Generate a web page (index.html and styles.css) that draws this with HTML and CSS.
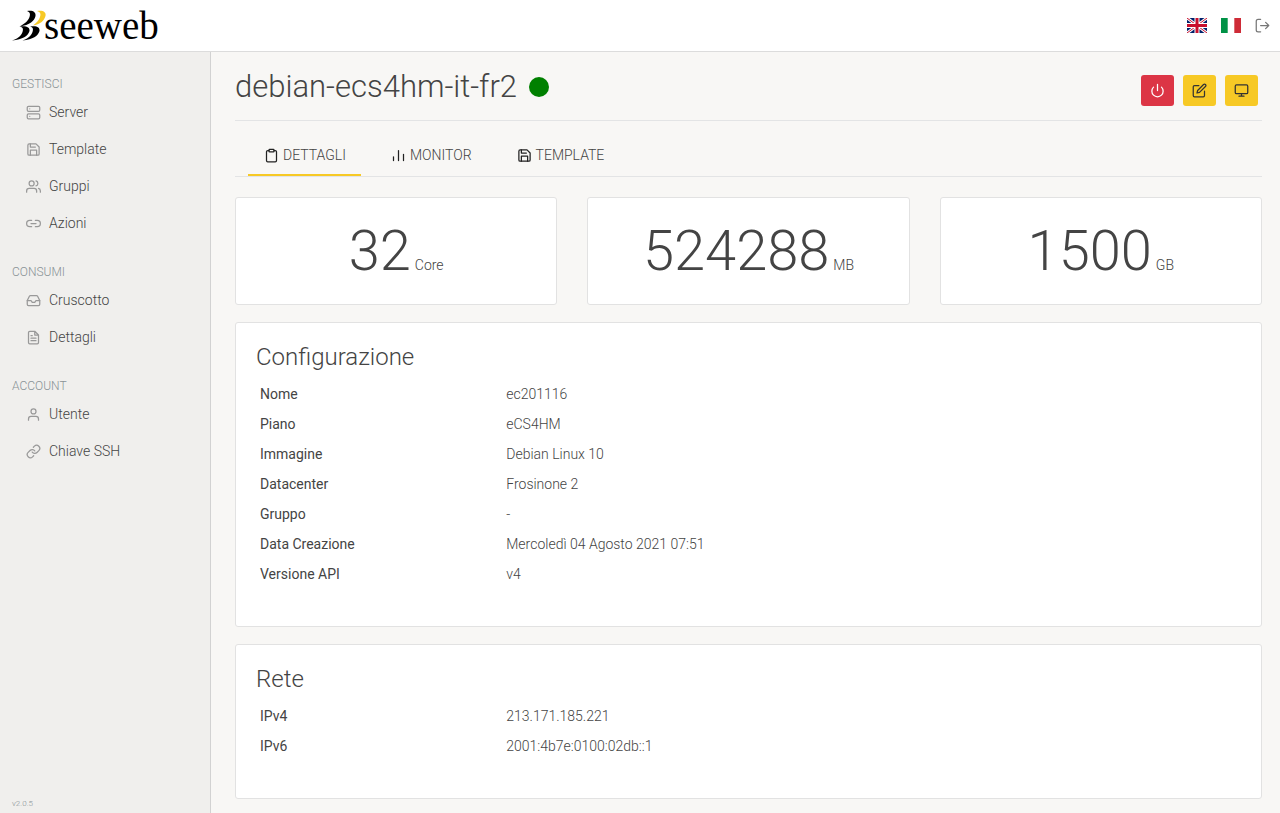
FILE: index.html
```html
<!DOCTYPE html>
<html lang="it">
<head>
<meta charset="utf-8">
<meta name="viewport" content="width=device-width, initial-scale=1">
<title>debian-ecs4hm-it-fr2 - Seeweb</title>
<link rel="stylesheet" href="styles.css">
</head>
<body>
<svg class="sprite" aria-hidden="true">
  <symbol id="save" viewBox="0 0 24 24"><path d="M19 21H5a2 2 0 0 1-2-2V5a2 2 0 0 1 2-2h11l5 5v11a2 2 0 0 1-2 2z"/><path d="M17 21v-8H7v8M7 3v5h8"/></symbol>
</svg>
<header class="topbar">
  <a class="brand" href="#" aria-label="seeweb">
    <svg class="brand-mark" viewBox="0 0 36 32" aria-hidden="true">
      <path d="M15 1C21 0 24 2 23.500 6C22.500 11 18 15 7.500 16.500C13 13.500 16 11 17.500 7C18.500 4 18 2 15 1Z"/>
      <path fill="#f7c925" d="M25 1C31 0 34.500 2 33.500 6C32 11 28 14.500 21 15.500C25 12.500 27 10 28 7C29 4 28.500 2 25 1Z"/>
      <path d="M7.500 16.500C14 15.500 18 17 17.500 21C16 26 11 29.500 0 30.500C6 28.500 9 26 10.500 22C11.500 19 11 17 7.500 16.500Z"/>
      <path d="M18 16.500C24.500 15.500 28 17 27.500 21C26 26 21 29.500 10.500 30.500C16 28.500 19 26 20.500 22C21.500 19 21 17 18 16.500Z"/>
    </svg>
    <span class="brand-name">seeweb</span>
  </a>
  <div class="topbar-tools">
    <button class="flag" aria-label="English">
      <svg viewBox="0 0 20 15"><path fill="#01216b" d="M0 0h20v15H0z"/><path stroke="#fff" stroke-width="3" d="M0 0l20 15M20 0L0 15"/><path stroke="#c8102e" stroke-width="1" d="M0 0l20 15M20 0L0 15"/><path stroke="#fff" stroke-width="5" d="M10 0v15M0 7.500h20"/><path stroke="#c8102e" stroke-width="3" d="M10 0v15M0 7.500h20"/></svg>
    </button>
    <button class="flag" aria-label="Italiano">
      <svg viewBox="0 0 20 15"><path fill="#fff" d="M0 0h20v15H0z"/><path fill="#009246" d="M0 0h6.700v15H0z"/><path fill="#ce2b37" d="M13.300 0H20v15h-6.700z"/></svg>
    </button>
    <button class="logout" aria-label="Esci"><svg class="icon" viewBox="0 0 24 24"><path d="M9 22H5a3 3 0 0 1-3-3V5a3 3 0 0 1 3-3h4M17 17l5-5-5-5M22 12H9"/></svg></button>
  </div>
</header>
<div class="shell">
  <nav class="sidebar" aria-label="Menu">
    <section class="menu-group">
      <h2 class="menu-title">GESTISCI</h2>
      <ul class="menu">
        <li><a class="menu-link" href="#"><svg class="icon" viewBox="0 0 24 24"><rect x="2" y="2" width="20" height="8" rx="2"/><rect x="2" y="14" width="20" height="8" rx="2"/><path d="M6 6h.01M6 18h.01"/></svg>Server</a></li>
        <li><a class="menu-link" href="#"><svg class="icon"><use href="#save"/></svg>Template</a></li>
        <li><a class="menu-link" href="#"><svg class="icon" viewBox="0 0 24 24"><path d="M17 21v-2a4 4 0 0 0-4-4H5a4 4 0 0 0-4 4v2"/><circle cx="9" cy="7" r="4"/><path d="M23 21v-2a4 4 0 0 0-3-3.870M16 3.130a4 4 0 0 1 0 7.750"/></svg>Gruppi</a></li>
        <li><a class="menu-link" href="#"><svg class="icon" viewBox="0 0 24 24"><path d="M15 7h3a5 5 0 0 1 0 10h-3m-6 0H6A5 5 0 0 1 6 7h3M8 12h8"/></svg>Azioni</a></li>
      </ul>
    </section>
    <section class="menu-group">
      <h2 class="menu-title">CONSUMI</h2>
      <ul class="menu">
        <li><a class="menu-link" href="#"><svg class="icon" viewBox="0 0 24 24"><path d="M22 12h-6l-2 3h-4l-2-3H2"/><path d="M5.450 5.110L2 12v6a2 2 0 0 0 2 2h16a2 2 0 0 0 2-2v-6l-3.450-6.890A2 2 0 0 0 16.760 4H7.240a2 2 0 0 0-1.790 1.110z"/></svg>Cruscotto</a></li>
        <li><a class="menu-link" href="#"><svg class="icon" viewBox="0 0 24 24"><path d="M14 2H6a2 2 0 0 0-2 2v16a2 2 0 0 0 2 2h12a2 2 0 0 0 2-2V8zM14 2v6h6M16 13H8M16 17H8M10 9H8"/></svg>Dettagli</a></li>
      </ul>
    </section>
    <section class="menu-group">
      <h2 class="menu-title">ACCOUNT</h2>
      <ul class="menu">
        <li><a class="menu-link" href="#"><svg class="icon" viewBox="0 0 24 24"><path d="M20 21v-2a4 4 0 0 0-4-4H8a4 4 0 0 0-4 4v2"/><circle cx="12" cy="7" r="4"/></svg>Utente</a></li>
        <li><a class="menu-link" href="#"><svg class="icon" viewBox="0 0 24 24"><path d="M10 13a5 5 0 0 0 7.540.540l3-3a5 5 0 0 0-7.070-7.070l-1.720 1.710"/><path d="M14 11a5 5 0 0 0-7.540-.540l-3 3a5 5 0 0 0 7.070 7.070l1.710-1.710"/></svg>Chiave SSH</a></li>
      </ul>
    </section>
    <p class="version">v2.0.5</p>
  </nav>
  <main class="content">
    <div class="page-head">
      <h1 class="page-title">debian-ecs4hm-it-fr2 <span class="status" role="img" aria-label="Acceso"></span></h1>
      <div class="actions">
        <button class="btn btn-danger" aria-label="Spegni"><svg class="icon" viewBox="0 0 24 24"><path d="M18.360 6.640a9 9 0 1 1-12.730 0M12 2v10"/></svg></button>
        <button class="btn" aria-label="Modifica"><svg class="icon" viewBox="0 0 24 24"><path d="M11 4H4a2 2 0 0 0-2 2v14a2 2 0 0 0 2 2h14a2 2 0 0 0 2-2v-7"/><path d="M18.500 2.500a2.121 2.121 0 0 1 3 3L12 15l-4 1 1-4z"/></svg></button>
        <button class="btn" aria-label="Console"><svg class="icon" viewBox="0 0 24 24"><rect x="2" y="3" width="20" height="14" rx="2"/><path d="M8 21h8M12 17v4"/></svg></button>
      </div>
    </div>
    <nav class="tabs" aria-label="Sezioni">
      <a class="tab tab-active" href="#" aria-current="page"><svg class="icon" viewBox="0 0 24 24"><path d="M16 4h2a2 2 0 0 1 2 2v14a2 2 0 0 1-2 2H6a2 2 0 0 1-2-2V6a2 2 0 0 1 2-2h2"/><rect x="8" y="2" width="8" height="4" rx="1"/></svg>DETTAGLI</a>
      <a class="tab" href="#"><svg class="icon" viewBox="0 0 24 24"><path d="M12 20V4M20 20v-10M4 20v-6"/></svg>MONITOR</a>
      <a class="tab" href="#"><svg class="icon"><use href="#save"/></svg>TEMPLATE</a>
    </nav>
    <div class="stats">
      <div class="card stat"><span class="stat-value">32</span> <span class="stat-unit">Core</span></div>
      <div class="card stat"><span class="stat-value">524288</span> <span class="stat-unit">MB</span></div>
      <div class="card stat"><span class="stat-value">1500</span> <span class="stat-unit">GB</span></div>
    </div>
    <section class="card panel">
      <h2 class="panel-title">Configurazione</h2>
      <table class="details">
        <tr><th scope="row">Nome</th><td>ec201116</td></tr>
        <tr><th scope="row">Piano</th><td>eCS4HM</td></tr>
        <tr><th scope="row">Immagine</th><td>Debian Linux 10</td></tr>
        <tr><th scope="row">Datacenter</th><td>Frosinone 2</td></tr>
        <tr><th scope="row">Gruppo</th><td>-</td></tr>
        <tr><th scope="row">Data Creazione</th><td>Mercoledì 04 Agosto 2021 07:51</td></tr>
        <tr><th scope="row">Versione API</th><td>v4</td></tr>
      </table>
    </section>
    <section class="card panel">
      <h2 class="panel-title">Rete</h2>
      <table class="details">
        <tr><th scope="row">IPv4</th><td>213.171.185.221</td></tr>
        <tr><th scope="row">IPv6</th><td>2001:4b7e:0100:02db::1</td></tr>
      </table>
    </section>
  </main>
</div>
</body>
</html>
```

FILE: styles.css
```css
* { box-sizing: border-box; }

body {
  margin: 0;
  min-height: 100vh;
  display: flex;
  flex-direction: column;
  background: #f8f7f5;
  color: #444;
  font: 300 14px/20px Roboto, sans-serif;
}

h1, h2, p, ul { margin: 0; padding: 0; font-weight: 300; }
ul { list-style: none; }
a { color: inherit; text-decoration: none; }
button { border: 0; padding: 0; background: none; cursor: pointer; }

.sprite { display: none; }

.icon {
  width: 15px;
  height: 15px;
  flex: none;
  fill: none;
  stroke: currentColor;
  stroke-width: 2;
  stroke-linecap: round;
  stroke-linejoin: round;
}

.topbar {
  display: flex;
  align-items: center;
  justify-content: space-between;
  height: 52px;
  padding: 0 10px 0 12px;
  background: #fff;
  border-bottom: 1px solid #dcdcdc;
}

.brand { display: flex; align-items: center; color: #000; }
.brand-mark { width: 36px; height: 32px; margin-right: -4px; }
.brand-name { font: 400 39px/48px "Liberation Serif", serif; }

.topbar-tools { display: flex; align-items: center; gap: 14px; }
.flag svg { display: block; width: 20px; height: 15px; }
.logout { display: flex; color: #777; }

.shell { display: flex; flex: 1; }

.sidebar {
  flex: 0 0 211px;
  display: flex;
  flex-direction: column;
  gap: 22px;
  padding: 23px 12px 3px;
  background: #f0efed;
  border-right: 1px solid #d2d2d2;
}

.menu-title { font-size: 12px; line-height: 18px; color: #899296; }
.menu-link {
  display: flex;
  align-items: center;
  gap: 8px;
  height: 37px;
  padding-left: 14px;
}
.menu-link .icon { color: #999; margin-top: 2px; }
.version { margin-top: auto; font-size: 8px; line-height: 12px; color: #899296; }

.content { flex: 1; min-width: 0; padding: 0 18px 14px 24px; }

.page-head {
  display: flex;
  align-items: flex-start;
  justify-content: space-between;
  padding: 16px 4px 14px 0;
  border-bottom: 1px solid #e3e4e5;
}
.page-title { display: flex; align-items: center; gap: 12px; font-size: 31px; line-height: 37px; }
.status { width: 20px; height: 20px; border-radius: 50%; background: #008000; }

.actions { display: flex; gap: 9px; padding-top: 7px; }
.btn {
  display: flex;
  align-items: center;
  justify-content: center;
  width: 33px;
  height: 31px;
  border-radius: 3px;
  background: #f7c925;
  color: #333;
}
.btn-danger { background: #dc3545; color: #fff; }

.tabs {
  display: flex;
  gap: 14px;
  padding: 13px 13px 0;
  border-bottom: 1px solid #e3e4e5;
}
.tab {
  display: flex;
  align-items: center;
  gap: 4px;
  padding: 11px 15px 9px 16px;
  border-bottom: 2px solid transparent;
}
.tab .icon { color: #222; }
.tab-active { border-color: #f7c925; }

.card { background: #fff; border: 1px solid #e2e2e2; border-radius: 3px; }

.stats {
  display: grid;
  grid-template-columns: repeat(3, 1fr);
  gap: 30px;
  padding-top: 20px;
}
.stat { display: flex; align-items: baseline; justify-content: center; gap: 4px; padding: 20px; }
.stat-value { font-size: 56px; line-height: 66px; }

.panel { margin-top: 17px; padding: 20px 20px 37px; }
.panel-title { margin-bottom: 7px; font-size: 24px; line-height: 29px; }

.details { width: 100%; border-collapse: collapse; table-layout: fixed; }
.details th, .details td { height: 30px; padding: 0 4px; text-align: left; }
.details th { width: 25%; font-weight: 400; }
```
